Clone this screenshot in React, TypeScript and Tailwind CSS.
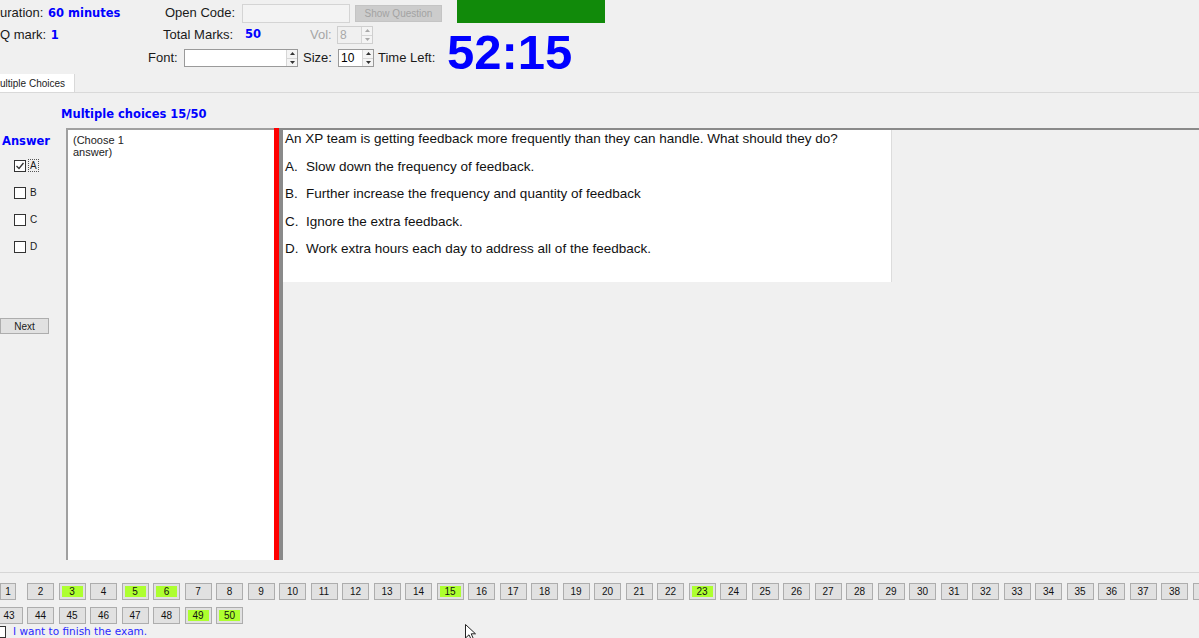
import clsx from "clsx";

const blue = "font-['DejaVu_Sans',sans-serif] font-bold text-[#0000ff] text-[11.5px]";

const Spinner = ({
  value,
  width,
  disabled,
}: {
  value: string;
  width: string;
  disabled?: boolean;
}) => (
  <div
    className={clsx(
      "flex h-[18px] items-stretch border",
      width,
      disabled ? "border-[#cfcfcf] bg-[#f0f0f0] text-[#a8a8a8]" : "border-[#9a9a9a] bg-white text-black"
    )}
  >
    <span className="flex-1 pl-[2px] text-[12px] leading-[16px]">{value}</span>
    <div className="flex w-[11px] flex-col border-l border-[#d6d6d6] bg-[#f4f4f4]">
      <div className="flex flex-1 items-center justify-center border-b border-[#d6d6d6]">
        <svg width="5" height="3" viewBox="0 0 5 3">
          <path d="M0 3 L2.5 0 L5 3 Z" fill={disabled ? "#a8a8a8" : "#333"} />
        </svg>
      </div>
      <div className="flex flex-1 items-center justify-center">
        <svg width="5" height="3" viewBox="0 0 5 3">
          <path d="M0 0 L2.5 3 L5 0 Z" fill={disabled ? "#a8a8a8" : "#333"} />
        </svg>
      </div>
    </div>
  </div>
);

const Box = ({ checked, className }: { checked?: boolean; className?: string }) => (
  <span className={clsx("inline-block h-[12px] w-[12px] shrink-0 border border-[#333] bg-white", className)}>
    {checked && (
      <svg width="10" height="10" viewBox="0 0 10 10">
        <path d="M1.5 5 L4 7.5 L8.5 2" stroke="#333" strokeWidth="1.3" fill="none" />
      </svg>
    )}
  </span>
);

const done = [3, 5, 6, 15, 23, 49, 50];

const NavBtn = ({ n, width = "w-[27px]", className }: { n?: number; width?: string; className?: string }) => (
  <div className={clsx("h-[17px] shrink-0 border border-[#adadad] bg-[#e1e1e1] p-[2px]", width, className)}>
    <div
      className={clsx(
        "flex h-full items-center justify-center text-[10px] leading-none text-[#111]",
        n !== undefined && done.includes(n) && "bg-[#adff2f]"
      )}
    >
      {n}
    </div>
  </div>
);

const options = [
  "Slow down the frequency of feedback.",
  "Further increase the frequency and quantity of feedback",
  "Ignore the extra feedback.",
  "Work extra hours each day to address all of the feedback.",
];

export default function App() {
  return (
    <div className="relative h-[638px] w-[1199px] overflow-hidden bg-[#f0f0f0] font-['Liberation_Sans',Arial,sans-serif] text-[#1a1a1a]">
      {/* Header */}
      <div className="flex h-[74px]">
        <div className="w-[457px] shrink-0">
          <div className="flex h-[24px] items-center whitespace-nowrap pt-[2px] text-[13px]">
            <span className="w-[165px] shrink-0">
              uration: <span className={clsx(blue, "ml-[1px]")}>60 minutes</span>
            </span>
            <span className="w-[77px] shrink-0">Open Code:</span>
            <div className="h-[19px] w-[108px] border border-[#d4d4d4] bg-[#f3f3f3]" />
            <div className="ml-[5px] flex h-[17px] w-[87px] items-center justify-center border border-[#c4c4c4] bg-[#cccccc] text-[10px] text-[#a3a3a3]">
              Show Question
            </div>
          </div>
          <div className="flex h-[22px] items-center whitespace-nowrap text-[13px]">
            <span className="w-[163px] shrink-0">
              Q mark: <span className={clsx(blue, "ml-[1px]")}>1</span>
            </span>
            <span className="w-[82px] shrink-0">Total Marks:</span>
            <span className={clsx(blue, "w-[65px] shrink-0")}>50</span>
            <span className="w-[27px] shrink-0 text-[#a6a6a6]">Vol:</span>
            <Spinner value="8" width="w-[36px]" disabled />
          </div>
          <div className="flex h-[24px] items-center whitespace-nowrap text-[13px]">
            <span className="ml-[148px] w-[36px] shrink-0">Font:</span>
            <Spinner value="" width="w-[114px]" />
            <span className="ml-[5px] w-[35px] shrink-0">Size:</span>
            <Spinner value="10" width="w-[36px]" />
            <span className="ml-[4px]">Time Left:</span>
          </div>
        </div>
        <div className="flex flex-col">
          <div className="h-[23px] w-[148px] shrink-0 bg-[#118a0a]" />
          <div className="-ml-[10px] mt-[5px] shrink-0 text-[49px] font-bold leading-none text-[#0000ff]">52:15</div>
        </div>
      </div>

      {/* Tabs */}
      <div className="flex h-[19px] border-b border-[#d9d9d9]">
        <div className="w-[75px] border-r border-[#d9d9d9] bg-white text-[10px] leading-[19px] text-[#222]">
          ultiple Choices
        </div>
      </div>

      {/* Title */}
      <div className="h-[35px] pl-[61px] pt-[14px]">
        <div className={clsx(blue, "leading-[14px]")}>Multiple choices 15/50</div>
      </div>

      {/* Main */}
      <div className="flex h-[432px]">
        <div className="flex w-[66px] shrink-0 flex-col pt-[6px]">
          <div className={clsx(blue, "pl-[2px] leading-[14px]")}>Answer</div>
          <div className="mt-[11px] flex flex-col gap-[14px] pl-[14px]">
            {["A", "B", "C", "D"].map((l) => (
              <div key={l} className="flex h-[13px] items-center">
                <Box checked={l === "A"} />
                {l === "A" ? (
                  <span className="ml-[2px] border border-dotted border-[#555] px-[1px] text-[10px] leading-[11px]">
                    A
                  </span>
                ) : (
                  <span className="ml-[4px] text-[10px]">{l}</span>
                )}
              </div>
            ))}
          </div>
          <div className="mt-[65px] flex h-[16px] w-[49px] items-center justify-center border border-[#adadad] bg-[#e1e1e1] text-[10px]">
            Next
          </div>
        </div>

        <div className="w-[208px] shrink-0 border-l-2 border-t-2 border-[#a0a0a0] bg-white pl-[5px] pt-[4px] text-[11px] leading-[12px] text-[#222]">
          (Choose 1
          <br />
          answer)
        </div>

        <div className="w-[5px] shrink-0 bg-[#ff0000]" />

        <div className="flex-1 border-l-4 border-t-2 border-[#8a8a8a]">
          <div className="flex h-[152px] w-[609px] flex-col gap-[12.5px] border-r border-[#dcdcdc] bg-white pl-[2px] pt-[1px] text-[13.5px] leading-[15px] text-[#111]">
            <p>An XP team is getting feedback more frequently than they can handle. What should they do?</p>
            {options.map((o, i) => (
              <p key={o}>
                <span className="inline-block w-[21px]">{"ABCD"[i]}.</span>
                {o}
              </p>
            ))}
          </div>
        </div>
      </div>

      {/* Bottom navigation */}
      <div className="h-[13px] border-b border-[#d6d6d6]" />
      <div className="mt-[10px] flex gap-[4.5px]">
        <NavBtn n={1} width="w-[16px]" className="mr-[6.5px]" />
        {Array.from({ length: 37 }).map((_, i) => (
          <NavBtn key={i} n={i + 2} />
        ))}
        <NavBtn />
      </div>
      <div className="-ml-[4.5px] mt-[7px] flex gap-[4.5px]">
        {Array.from({ length: 8 }).map((_, i) => (
          <NavBtn key={i} n={i + 43} />
        ))}
      </div>
      <div className="mt-[2px] flex h-[12px] items-center">
        <Box className="-ml-[6px]" />
        <span className="ml-[7px] font-['DejaVu_Sans',sans-serif] text-[10.5px] text-[#2a2aff]">
          I want to finish the exam.
        </span>
      </div>

      {/* Mouse cursor */}
      <svg className="absolute left-[465px] top-[624px]" width="12" height="17" viewBox="0 0 12 17">
        <path d="M0.5 0.5 L0.5 14 L4 10.8 L6.5 16 L8.5 15 L6.2 9.8 L10.5 9.8 Z" fill="white" stroke="#222" strokeWidth="1" />
      </svg>
    </div>
  );
}
